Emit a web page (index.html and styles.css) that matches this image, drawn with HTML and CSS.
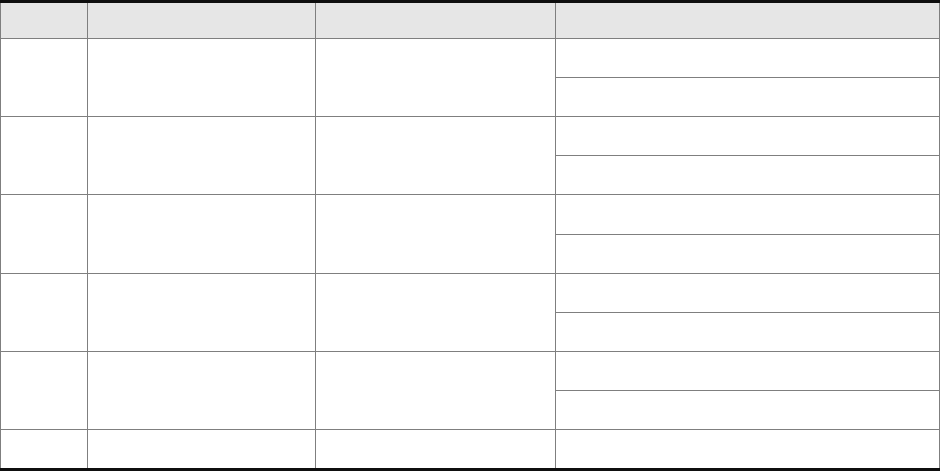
FILE: index.html
```html
<!DOCTYPE html>
<html>
<head>
<meta charset="utf-8">
<link rel="stylesheet" href="styles.css">
</head>
<body>
<div class="table">
  <div class="cell head"></div><div class="cell head"></div><div class="cell head"></div><div class="cell head"></div>

  <div class="cell span2"></div><div class="cell span2"></div><div class="cell span2"></div><div class="cell"></div><div class="cell"></div>
  <div class="cell span2"></div><div class="cell span2"></div><div class="cell span2"></div><div class="cell"></div><div class="cell"></div>
  <div class="cell span2"></div><div class="cell span2"></div><div class="cell span2"></div><div class="cell"></div><div class="cell"></div>
  <div class="cell span2"></div><div class="cell span2"></div><div class="cell span2"></div><div class="cell"></div><div class="cell"></div>
  <div class="cell span2"></div><div class="cell span2"></div><div class="cell span2"></div><div class="cell"></div><div class="cell"></div>

  <div class="cell"></div><div class="cell"></div><div class="cell"></div><div class="cell"></div>
</div>
</body>
</html>
```
FILE: styles.css
```css
html, body {
  margin: 0;
  padding: 0;
  background: #ffffff;
  font-family: "Liberation Sans", Arial, sans-serif;
}

.table {
  box-sizing: border-box;
  width: 940px;
  height: 471px;
  display: grid;
  grid-template-columns: 86px 227px 239px 383px;
  grid-template-rows: 35px 38px 38px 38px 38px 39px 38px 38px 38px 38px 38px 38px;
  gap: 1px;
  padding: 0 1px;
  background: #7f7f7f;
  border-top: 3px solid #0f0f0f;
  border-bottom: 3px solid #0f0f0f;
}

.cell {
  background: #ffffff;
}

.head {
  background: #e6e6e6;
}

.span2 {
  grid-row: span 2;
}
```
